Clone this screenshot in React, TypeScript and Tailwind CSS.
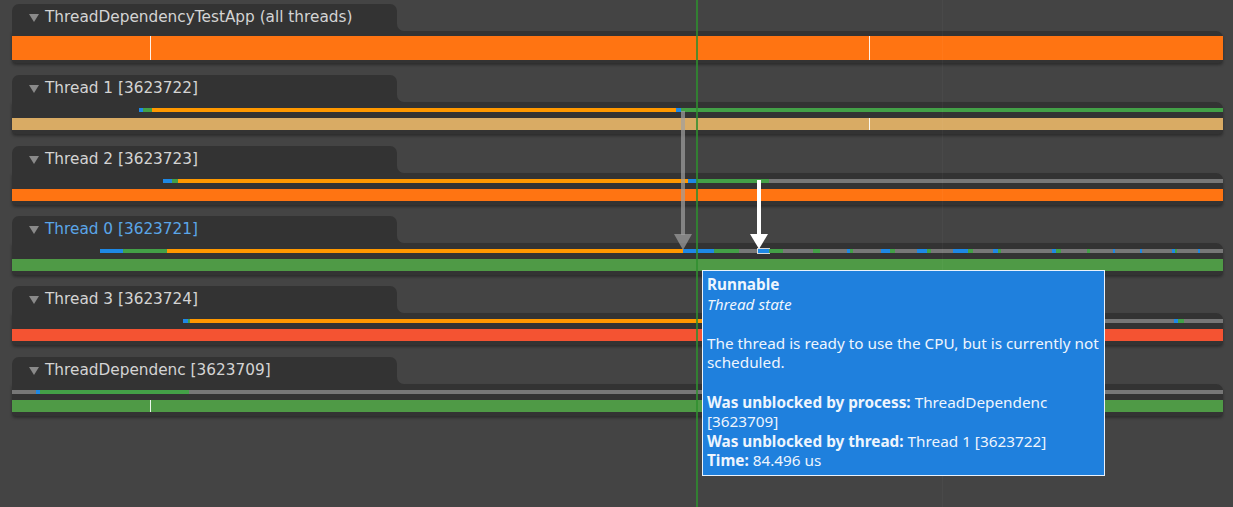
import type { ReactNode } from 'react'

type Seg = [number, number, string]

const C = {
  blue: '#1e88e5',
  green: '#43a047',
  orange: '#ff9800',
  gray: '#777777',
  none: 'transparent',
  sel: 'sel',
}

const X0 = 12
const X1 = 1223

type Row = {
  label: string
  active?: boolean
  h: string
  bar: string
  ticks?: number[]
  segs?: Seg[]
}

const thread0: Seg[] = [
  [12, 100, C.none], [100, 123, C.blue], [123, 167, C.green], [167, 683, C.orange],
  [683, 714, C.blue], [714, 739, C.green], [739, 758, C.gray], [758, 769, C.sel],
  [769, 783, C.green], [783, 813, C.gray], [813, 820, C.green], [820, 847, C.gray],
  [847, 850, C.blue], [850, 853, C.green], [853, 881, C.gray], [881, 890, C.blue],
  [890, 895, C.green], [895, 917, C.gray], [917, 927, C.blue], [927, 931, C.green],
  [931, 953, C.gray], [953, 968, C.blue], [968, 973, C.green], [973, 993, C.gray],
  [993, 998, C.blue], [998, 1001, C.green], [1001, 1052, C.gray], [1052, 1056, C.blue],
  [1056, 1061, C.green], [1061, 1087, C.gray], [1087, 1090, C.green], [1090, 1113, C.gray],
  [1113, 1115, C.blue], [1115, 1140, C.gray], [1140, 1142, C.blue], [1142, 1172, C.gray],
  [1172, 1175, C.blue], [1175, 1177, C.green], [1177, 1198, C.gray], [1198, 1200, C.blue],
  [1200, 1223, C.gray],
]

const rows: Row[] = [
  { label: 'ThreadDependencyTestApp (all threads)', h: 'h-[71px]', bar: 'bg-[#ff7412]', ticks: [150, 869] },
  {
    label: 'Thread 1 [3623722]', h: 'h-[71px]', bar: 'bg-[#d9ab64]', ticks: [869],
    segs: [[12, 139, C.none], [139, 143, C.blue], [143, 152, C.green], [152, 676, C.orange], [676, 681, C.blue], [681, 1223, C.green]],
  },
  {
    label: 'Thread 2 [3623723]', h: 'h-[70px]', bar: 'bg-[#ff7412]',
    segs: [[12, 163, C.none], [163, 172, C.blue], [172, 178, C.green], [178, 688, C.orange], [688, 697, C.blue], [697, 769, C.green], [769, 1223, C.gray]],
  },
  { label: 'Thread 0 [3623721]', active: true, h: 'h-[70px]', bar: 'bg-[#4f9a46]', segs: thread0 },
  {
    label: 'Thread 3 [3623724]', h: 'h-[71px]', bar: 'bg-[#f45332]',
    segs: [[12, 183, C.none], [183, 188, C.blue], [188, 190, C.green], [190, 705, C.orange], [705, 1174, C.gray], [1174, 1178, C.blue], [1178, 1184, C.green], [1184, 1223, C.gray]],
  },
  {
    label: 'ThreadDependenc [3623709]', h: 'h-[71px]', bar: 'bg-[#4f9a46]', ticks: [150],
    segs: [[12, 36, C.gray], [36, 40, C.blue], [40, 189, C.green], [189, 1223, C.gray]],
  },
]

function Ticks({ xs }: { xs?: number[] }) {
  return (
    <>
      {xs?.map((x) => (
        <span key={x} className="absolute top-0 bottom-0 w-px bg-white/90" style={{ left: x - X0 }} />
      ))}
    </>
  )
}

function ThinLine({ segs }: { segs: Seg[] }) {
  return (
    <div className="flex h-[4px]">
      {segs.map(([a, b, c], i) =>
        c === 'sel' ? (
          <div key={i} className="h-full shrink-0 bg-[#1e88e5] outline outline-1 outline-white/80" style={{ width: b - a }} />
        ) : (
          <div key={i} className="h-full shrink-0" style={{ width: b - a, background: c }} />
        ),
      )}
    </div>
  )
}

function Track({ row }: { row: Row }) {
  return (
    <div className={`${row.h} shrink-0`}>
      <div className="flex h-[27px]">
        <div className="flex w-[385px] items-center gap-[6px] rounded-t-[7px] bg-[#333333] pl-[17px]">
          <svg width="10" height="8" viewBox="0 0 10 8">
            <polygon points="0,0 10,0 5,8" fill="#8a8a8a" />
          </svg>
          <span
            className={`font-['DejaVu_Sans',sans-serif] text-[15.3px] leading-none ${row.active ? 'text-[#5ba6e8]' : 'text-[#d4d4d4]'}`}
          >
            {row.label}
          </span>
        </div>
        <div className="relative flex-1">
          <div className="absolute bottom-0 left-0 h-[8px] w-[8px] bg-[#333333]">
            <div className="h-full w-full rounded-bl-[7px] bg-[#444444]" />
          </div>
        </div>
      </div>
      {row.segs ? (
        <div className="flex h-[32px] flex-col rounded-tr-[7px] rounded-b-[4px] bg-[#333333] pt-[6px] pb-[4px] shadow-[0_2px_3px_rgba(0,0,0,0.35)]">
          <ThinLine segs={row.segs} />
          <div className={`relative mt-[6px] h-[12px] ${row.bar}`}>
            <Ticks xs={row.ticks} />
          </div>
        </div>
      ) : (
        <div className="flex h-[32px] flex-col rounded-tr-[7px] rounded-b-[4px] bg-[#333333] pt-[5px] pb-[3px] shadow-[0_2px_3px_rgba(0,0,0,0.35)]">
          <div className={`relative h-[24px] ${row.bar}`}>
            <Ticks xs={row.ticks} />
          </div>
        </div>
      )}
    </div>
  )
}

function Line({ children }: { children: ReactNode }) {
  return <div className="h-[19.6px] whitespace-nowrap">{children}</div>
}

function Tooltip() {
  return (
    <div className="absolute left-[702px] top-[270px] w-[403px] border border-white/90 bg-[#1f80dd] px-[4px] py-[4px] font-['Noto_Sans',sans-serif] text-[15.3px] leading-[19.6px] text-[#eef5fd]">
      <Line><b>Runnable</b></Line>
      <Line><i>Thread state</i></Line>
      <Line>{' '}</Line>
      <Line>The thread is ready to use the CPU, but is currently not</Line>
      <Line>scheduled.</Line>
      <Line>{' '}</Line>
      <Line><b>Was unblocked by process:</b> ThreadDependenc</Line>
      <Line>[3623709]</Line>
      <Line><b>Was unblocked by thread:</b> Thread 1 [3623722]</Line>
      <Line><b>Time:</b> 84.496 us</Line>
    </div>
  )
}

function Arrows() {
  return (
    <svg className="pointer-events-none absolute left-0 top-0" width="1233" height="507">
      <rect x="696" y="0" width="2" height="507" fill="#2e8f2e" fillOpacity="0.8" />
      <g fill="#a0a0a0" fillOpacity="0.7">
        <rect x="681" y="111" width="4" height="124" />
        <polygon points="674,234 692,234 683,250" />
      </g>
      <g fill="#ffffff">
        <rect x="757" y="180" width="4" height="55" />
        <polygon points="750,234 768,234 759,249" />
      </g>
    </svg>
  )
}

export default function App() {
  return (
    <div className="relative h-[507px] w-[1233px] overflow-hidden bg-[#444444]">
      <div className="flex flex-col pt-[4px]" style={{ paddingLeft: X0, width: X1 }}>
        {rows.map((r) => (
          <Track key={r.label} row={r} />
        ))}
      </div>
      <div className="absolute top-0 bottom-0 left-[942px] w-px bg-white/[0.03]" />
      {/* cursor line + dependency arrows */}
      <Arrows />
      <Tooltip />
    </div>
  )
}
